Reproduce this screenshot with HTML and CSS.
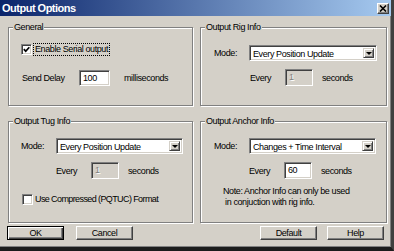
FILE: index.html
```html
<!DOCTYPE html>
<html>
<head>
<meta charset="utf-8">
<link rel="stylesheet" href="styles.css">
</head>
<body>
<div class="window">
  <div class="titlebar">
    <span class="title">Output Options</span>
    <span class="close"><svg width="8" height="7" viewBox="0 0 8 7"><path d="M1 0.5 L7 6.5 M7 0.5 L1 6.5" stroke="#000" stroke-width="1.6"/></svg></span>
  </div>
  <div class="groups">
    <fieldset class="group">
      <legend>General</legend>
      <div class="gbody general">
        <div class="check-row">
          <span class="checkbox"><svg width="7" height="7" viewBox="0 0 7 7"><polyline points="0.8,3.2 2.7,5.2 6.3,1.2" fill="none" stroke="#000" stroke-width="1.7"/></svg></span>
          <span class="focus">Enable Serial output</span>
        </div>
        <div class="row delay-row">
          <span class="lbl delay-lbl">Send Delay</span>
          <span class="input w31">100</span>
          <span class="unit ms">milliseconds</span>
        </div>
      </div>
    </fieldset>
    <fieldset class="group">
      <legend>Output Rig Info</legend>
      <div class="gbody top right">
        <div class="row">
          <span class="lbl mode">Mode:</span>
          <span class="select"><span class="sel-text">Every Position Update</span><span class="drop"><span class="tri"></span></span></span>
        </div>
        <div class="row every-row">
          <span class="lbl mode">Every</span>
          <span class="input w28 disabled">1</span>
          <span class="unit">seconds</span>
        </div>
      </div>
    </fieldset>
    <fieldset class="group">
      <legend>Output Tug Info</legend>
      <div class="gbody bottom left">
        <div class="row">
          <span class="lbl mode">Mode:</span>
          <span class="select"><span class="sel-text">Every Position Update</span><span class="drop"><span class="tri"></span></span></span>
        </div>
        <div class="row every-row">
          <span class="lbl mode">Every</span>
          <span class="input w28 disabled">1</span>
          <span class="unit">seconds</span>
        </div>
        <div class="check-row compressed">
          <span class="checkbox"></span>
          <span class="plain">Use Compressed (PQTUC) Format</span>
        </div>
      </div>
    </fieldset>
    <fieldset class="group">
      <legend>Output Anchor Info</legend>
      <div class="gbody bottom right">
        <div class="row">
          <span class="lbl mode">Mode:</span>
          <span class="select"><span class="sel-text">Changes + Time Interval</span><span class="drop"><span class="tri"></span></span></span>
        </div>
        <div class="row every-row">
          <span class="lbl mode">Every</span>
          <span class="input w28">60</span>
          <span class="unit">seconds</span>
        </div>
        <p class="note">Note: Anchor Info can only be used<br>&nbsp;in conjuction with rig info.</p>
      </div>
    </fieldset>
  </div>
  <div class="buttons">
    <div class="btn-group left-btns">
      <span class="btn default">OK</span>
      <span class="btn">Cancel</span>
    </div>
    <div class="btn-group right-btns">
      <span class="btn">Default</span>
      <span class="btn">Help</span>
    </div>
  </div>
</div>
</body>
</html>
```
FILE: styles.css
```css
* { box-sizing: border-box; }
html, body { margin: 0; padding: 0; }
body {
  width: 394px;
  height: 251px;
  overflow: hidden;
  background: #d4d0c8;
  font-family: "Liberation Sans", Arial, sans-serif;
  font-size: 9px;
  letter-spacing: -0.4px;
  color: #000;
}
.window {
  width: 394px;
  height: 251px;
  background: #d4d0c8;
  border-right: 3px solid #404040;
  border-bottom: 4px solid #1c1c1c;
  box-shadow: inset -1px -1px 0 #808080;
  display: flex;
  flex-direction: column;
}
.titlebar {
  height: 16px;
  flex: none;
  background: linear-gradient(to right, #0a246a, #a6caf0);
  display: flex;
  align-items: center;
  justify-content: space-between;
  padding: 0 2px 0 2px;
  color: #fff;
}
.title {
  font-weight: bold;
  font-size: 11px;
  letter-spacing: -0.5px;
  line-height: 16px;
}
.close {
  width: 12px;
  height: 11px;
  background: #d4d0c8;
  border: 1px solid;
  border-color: #fff #404040 #404040 #fff;
  box-shadow: inset -1px -1px 0 #808080;
  display: flex;
  align-items: center;
  justify-content: center;
}
.close svg { display: block; }
.groups {
  margin: 6px 0 0 8px;
  display: grid;
  grid-template-columns: 185px 187px;
  grid-template-rows: 84px 107px;
  column-gap: 7px;
  row-gap: 10px;
}
.group {
  margin: 0;
  padding: 0;
  min-width: 0;
  border: 1px solid #808080;
  box-shadow: inset 1px 1px 0 #fff, 1px 1px 0 #fff;
}
.group legend {
  margin-left: 4px;
  padding: 0 1px;
  height: 11px;
  line-height: 11px;
  background: #d4d0c8;
}
.gbody { display: flex; flex-direction: column; align-items: flex-start; }
.gbody.general { padding: 10px 0 0 12px; }
.gbody.top { padding-top: 12px; }
.gbody.bottom { padding-top: 11px; }
.gbody.left { padding-left: 12px; }
.gbody.right { padding-left: 13px; }
.row { display: flex; align-items: center; }
.check-row { display: flex; align-items: center; height: 13px; }
.checkbox {
  width: 11px;
  height: 11px;
  background: #fff;
  border: 1px solid;
  border-color: #808080 #fff #fff #808080;
  box-shadow: inset 1px 1px 0 #404040, inset -1px -1px 0 #d4d0c8;
  display: flex;
  align-items: center;
  justify-content: center;
}
.checkbox svg { display: block; }
.focus {
  margin-left: 1px;
  padding: 0 1px;
  height: 13px;
  line-height: 11px;
  border: 1px dotted #000;
}
.plain { margin-left: 2px; line-height: 13px; letter-spacing: -0.6px; }
.compressed { margin-top: 14px; margin-left: 1px; }
.delay-row { margin-top: 14px; }
.delay-lbl { width: 58px; padding-left: 1px; }
.lbl { line-height: 12px; }
.mode { width: 35px; }
.input {
  height: 17px;
  background: #fff;
  border: 1px solid;
  border-color: #808080 #fff #fff #808080;
  box-shadow: inset 1px 1px 0 #404040, inset -1px -1px 0 #d4d0c8;
  padding: 2px 0 0 3px;
  line-height: 11px;
}
.w31 { width: 31px; height: 16px; }
.w28 { width: 28px; }
.input.disabled {
  background: #d4d0c8;
  color: #808080;
  text-shadow: 1px 1px 0 #fff;
}
.unit { margin-left: 9px; }
.unit.ms { margin-left: 14px; }
.select {
  width: 128px;
  height: 16px;
  background: #fff;
  border: 1px solid;
  border-color: #808080 #fff #fff #808080;
  box-shadow: inset 1px 1px 0 #404040, inset -1px -1px 0 #d4d0c8;
  display: flex;
  align-items: stretch;
  padding: 2px 2px 2px 2px;
}
.sel-text { flex: 1; line-height: 12px; padding-left: 1px; }
.drop {
  width: 11px;
  background: #d4d0c8;
  border: 1px solid;
  border-color: #d4d0c8 #404040 #404040 #d4d0c8;
  box-shadow: inset 1px 1px 0 #fff, inset -1px -1px 0 #808080;
  display: flex;
  align-items: center;
  justify-content: center;
}
.tri {
  width: 0;
  height: 0;
  border-left: 3px solid transparent;
  border-right: 3px solid transparent;
  border-top: 3px solid #000;
}
.every-row { margin-top: 8px; margin-left: 36px; }
.bottom .every-row { margin-left: 35px; }
.bottom.right .select, .bottom.left .select { width: 127px; }
.note {
  margin: 7px 0 0 9px;
  line-height: 11px;
}
.buttons {
  margin-top: 3px;
  padding: 0 7px 0 7px;
  display: flex;
  justify-content: space-between;
}
.btn-group { display: flex; }
.left-btns { gap: 12px; }
.right-btns { gap: 10px; }
.btn {
  width: 57px;
  height: 14px;
  background: #d4d0c8;
  border: 1px solid;
  border-color: #fff #404040 #404040 #fff;
  box-shadow: inset -1px -1px 0 #808080;
  display: flex;
  align-items: center;
  justify-content: center;
  line-height: 12px;
}
.btn.default {
  border: 1px solid #000;
  box-shadow: inset 1px 1px 0 #fff, inset -1px -1px 0 #404040, inset -2px -2px 0 #808080;
}
```
